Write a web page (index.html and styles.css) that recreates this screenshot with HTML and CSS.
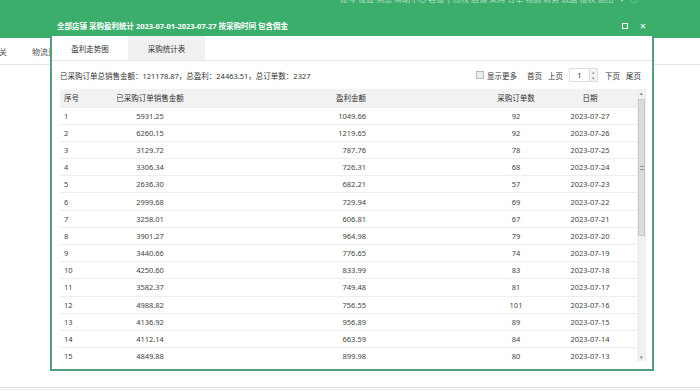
FILE: index.html
```html
<!DOCTYPE html>
<html lang="zh-CN">
<head>
  <meta charset="UTF-8" />
  <meta name="viewport" content="width=device-width, initial-scale=1" />
  <title>采购盈利统计</title>
  <link rel="stylesheet" href="styles.css">
</head>
<body>
  <!-- Page behind the dialog -->
  <div class="topbar">
    <div class="topbar-text">账号 设置 消息 帮助中心 客服 | 授权 店铺 采购 订单 物流 财务 数据 报表 退出 &nbsp; ▾ &nbsp; □</div>
  </div>
  <div class="nav">
    <span class="nav-item">关</span>
    <span class="nav-item">物流追踪</span>
  </div>
  <div class="page"></div>
  <div class="footer"></div>

  <!-- Dialog -->
  <div class="dialog">
    <div class="dialog-title">
      <span>全部店铺 采购盈利统计 2023-07-01-2023-07-27 按采购时间 包含佣金</span>
      <span class="dialog-actions">
        <span class="icon-max"></span>
        <span class="icon-close">×</span>
      </span>
    </div>
    <div class="tabs">
      <div class="tab">盈利走势图</div>
      <div class="tab active">采购统计表</div>
    </div>
    <div class="toolbar">
      <div class="summary">已采购订单总销售金额：121178.87，总盈利：24463.51，总订单数：2327</div>
      <div class="pager">
        <label class="more"><span class="checkbox"></span>显示更多</label>
        <span class="pager-link">首页</span>
        <span class="pager-link">上页</span>
        <span class="page-input">
          <span class="page-num">1</span>
          <span class="spinner"><span>▴</span><span>▾</span></span>
        </span>
        <span class="pager-link">下页</span>
        <span class="pager-link last">尾页</span>
      </div>
    </div>
    <div class="grid-wrap">
      <table class="grid">
        <colgroup>
          <col class="c-no"><col class="c-sales"><col class="c-profit"><col class="c-count"><col class="c-date">
        </colgroup>
        <thead>
          <tr><th class="left">序号</th><th>已采购订单销售金额</th><th class="right">盈利金额</th><th>采购订单数</th><th class="date">日期</th></tr>
        </thead>
        <tbody id="rows"></tbody>
      </table>
      <div class="scrollbar">
        <span class="arrow">▴</span>
        <div class="track"><div class="thumb"><span class="grip"></span></div></div>
        <span class="arrow">▾</span>
      </div>
    </div>
  </div>

  <script>
    // Daily purchase rows, newest first
    const data = [
      ['5931.25', '1049.66', 92, '2023-07-27'],
      ['6260.15', '1219.65', 92, '2023-07-26'],
      ['3129.72', '787.76', 78, '2023-07-25'],
      ['3306.34', '726.31', 68, '2023-07-24'],
      ['2636.30', '682.21', 57, '2023-07-23'],
      ['2999.68', '729.94', 69, '2023-07-22'],
      ['3258.01', '606.81', 67, '2023-07-21'],
      ['3901.27', '964.98', 79, '2023-07-20'],
      ['3440.66', '776.65', 74, '2023-07-19'],
      ['4250.60', '833.99', 83, '2023-07-18'],
      ['3582.37', '749.48', 81, '2023-07-17'],
      ['4988.82', '756.55', 101, '2023-07-16'],
      ['4136.92', '956.89', 89, '2023-07-15'],
      ['4112.14', '663.59', 84, '2023-07-14'],
      ['4849.88', '899.98', 80, '2023-07-13']
    ];

    const tbody = document.getElementById('rows');
    data.forEach((row, i) => {
      const tr = document.createElement('tr');
      tr.innerHTML =
        '<td class="left">' + (i + 1) + '</td>' +
        '<td>' + row[0] + '</td>' +
        '<td class="right">' + row[1] + '</td>' +
        '<td>' + row[2] + '</td>' +
        '<td class="date">' + row[3] + '</td>';
      tbody.appendChild(tr);
    });
  </script>
</body>
</html>
```

FILE: styles.css
```css
/* Reset and basic styles */
* {
  box-sizing: border-box;
  margin: 0;
  padding: 0;
}
body {
  width: 700px;
  height: 391px;
  overflow: hidden;
  position: relative;
  display: flex;
  flex-direction: column;
  background: #fff;
  color: #444;
  font-family: "Noto Sans", "Noto Sans CJK SC", sans-serif;
  font-size: 7.5px;
}
/* Background page */
.topbar {
  height: 38px;
  background: #3cae6c;
  overflow: hidden;
}
.topbar-text {
  margin-top: -7px;
  padding-left: 340px;
  color: rgba(255, 255, 255, 0.6);
  white-space: nowrap;
  font-size: 8px;
  line-height: 12px;
}
.nav {
  height: 27px;
  display: flex;
  align-items: center;
  gap: 25px;
  border-bottom: 1px solid #e6e6e6;
  font-size: 8px;
  color: #555;
  margin-left: -1px;
}
.page {
  flex: 1;
  background: #fff;
}
.footer {
  height: 4px;
  border-top: 1px solid #e2e2e2;
  background: #f6f6f6;
}
/* Dialog */
.dialog {
  position: absolute;
  left: 50px;
  top: 15px;
  width: 604px;
  height: 356px;
  background: #fff;
  border: 2px solid #4fa07c;
  border-top: none;
  display: flex;
  flex-direction: column;
}
.dialog-title {
  height: 21px;
  margin: 0 -2px;
  padding: 0 8px 0 7px;
  background: #3cae6c;
  color: #fff;
  font-weight: bold;
  display: flex;
  align-items: center;
  justify-content: space-between;
}
.dialog-actions {
  display: flex;
  align-items: center;
  gap: 12px;
}
.icon-max {
  width: 6px;
  height: 6px;
  border: 1.2px solid #fff;
}
.icon-close {
  font-size: 11px;
  font-weight: normal;
  line-height: 1;
}
.tabs {
  height: 25px;
  display: flex;
  border-bottom: 1px solid #e8e8e8;
}
.tab {
  width: 76px;
  display: flex;
  align-items: center;
  justify-content: center;
  color: #333;
}
.tab.active {
  width: 77px;
  background: #f1f1f1;
}
.toolbar {
  height: 28px;
  display: flex;
  align-items: center;
  justify-content: space-between;
  padding: 0 11px 0 8px;
  color: #333;
}
.pager {
  display: flex;
  align-items: center;
}
.more {
  display: flex;
  align-items: center;
  gap: 3px;
  margin-right: 10px;
}
.checkbox {
  width: 8px;
  height: 8px;
  border: 1px solid #bbb;
  background: #eee;
}
.pager-link {
  margin-right: 6px;
}
.pager-link.last {
  margin-right: 0;
}
.page-input {
  display: flex;
  height: 14px;
  margin-right: 7px;
}
.page-num {
  width: 21px;
  border: 1px solid #ddd;
  display: flex;
  align-items: center;
  justify-content: center;
}
.spinner {
  width: 8px;
  display: flex;
  flex-direction: column;
  border: 1px solid #ddd;
  border-left: none;
  background: #f4f4f4;
  color: #999;
  font-size: 5px;
  line-height: 6px;
  text-align: center;
}
/* Data grid */
.grid-wrap {
  display: flex;
  margin: 0 6px 0 8px;
  height: 274px;
  overflow: hidden;
}
.grid {
  width: 577px;
  table-layout: fixed;
  border-collapse: collapse;
}
.c-no { width: 55px; }
.c-sales { width: 70px; }
.c-profit { width: 285px; }
.c-count { width: 92px; }
.c-date { width: 75px; }
.grid th {
  height: 18px;
  background: #f2f2f2;
  font-weight: normal;
  color: #333;
  text-align: center;
}
.grid td {
  height: 17.2px;
  border-top: 1px solid #eee;
  text-align: center;
}
.grid .left {
  text-align: left;
  padding-left: 4px;
}
.grid .right {
  text-align: right;
  padding-right: 104px;
}
.grid .date {
  padding-right: 19px;
}
.scrollbar {
  width: 10px;
  height: 272px;
  background: #f0f0f0;
  display: flex;
  flex-direction: column;
  align-items: center;
  color: #777;
  font-size: 5px;
}
.arrow {
  height: 8px;
  line-height: 8px;
}
.track {
  flex: 1;
  width: 100%;
  padding: 0 1px;
}
.thumb {
  height: 137px;
  margin-top: 2px;
  background: #dcdcdc;
  border: 1px solid #c8c8c8;
  display: flex;
  align-items: center;
  justify-content: center;
}
.grip {
  width: 4px;
  height: 4px;
  border-top: 1px solid #999;
  border-bottom: 1px solid #999;
}
```
